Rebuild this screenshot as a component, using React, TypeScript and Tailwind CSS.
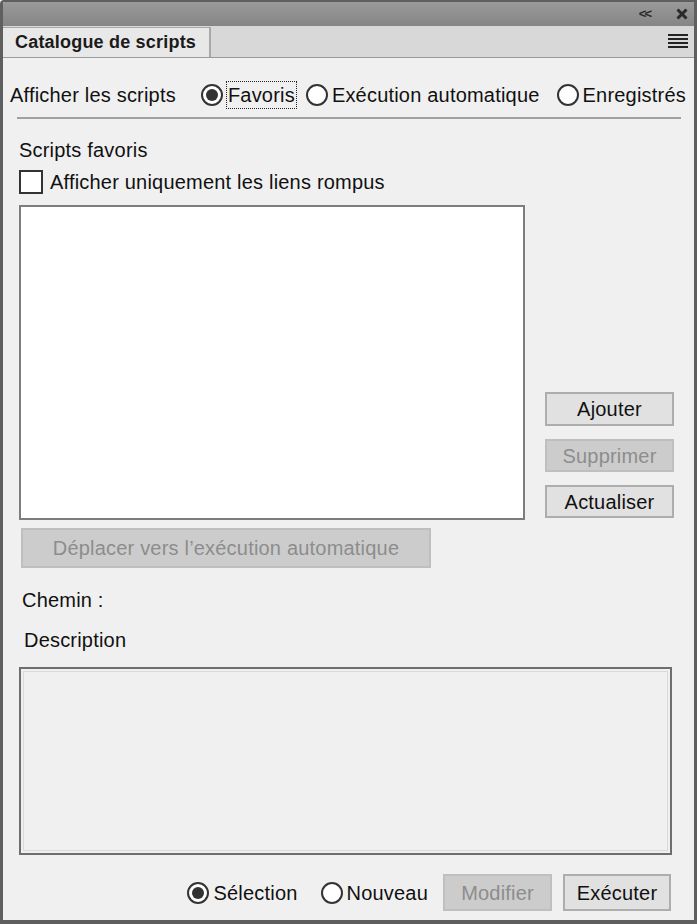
import type { ReactNode } from 'react'

// Radio bullet drawn as a circle, filled when checked
function Radio({ checked, label, focused }: { checked?: boolean; label: string; focused?: boolean }) {
  return (
    <span className="flex items-center gap-[4px]">
      <span className="flex h-[22px] w-[22px] items-center justify-center rounded-full border-2 border-[#333] bg-white">
        {checked && <span className="h-[12px] w-[12px] rounded-full bg-[#333]" />}
      </span>
      <span className={focused ? 'outline-1 outline-dotted outline-[#222] px-[1px] leading-[26px]' : 'leading-[26px]'}>
        {label}
      </span>
    </span>
  )
}

function Btn({ children, disabled, className = '' }: { children: ReactNode; disabled?: boolean; className?: string }) {
  return (
    <div
      className={`flex items-center justify-center border-2 ${
        disabled ? 'border-[#bfbfbf] bg-[#cccccc] text-[#8d8d8d]' : 'border-[#adadad] bg-[#e1e1e1] text-[#111]'
      } ${className}`}
    >
      {children}
    </div>
  )
}

export default function App() {
  return (
    <div
      className="flex h-[924px] w-[697px] flex-col overflow-hidden rounded-tl-[4px] border-x-[3px] border-b-[4px] border-t-[2px] border-[#5f5f5f] bg-[#f0f0f0] text-[20px] tracking-[0.2px] text-[#111]"
      style={{ fontFamily: '"Liberation Sans", Arial, sans-serif' }}
    >
      {/* title bar */}
      <div className="flex h-[24px] items-center justify-end gap-[26px] bg-gradient-to-b from-[#9a9a9a] to-[#858585] pr-[6px]">
        <span className="text-[13px] font-bold tracking-[-2px] text-[#2a2a2a]">&lt;&lt;</span>
        <svg width="12" height="12" viewBox="0 0 12 12">
          <path d="M1.5 1.5 L10.5 10.5 M10.5 1.5 L1.5 10.5" stroke="#2a2a2a" strokeWidth="3" />
        </svg>
      </div>

      {/* tab row */}
      <div className="flex h-[32px] items-end border-b border-[#9a9a9a] bg-[#d8d8d8]">
        <div className="flex h-[30px] w-[208px] items-center border-r-2 border-t border-[#a8a8a8] bg-[#e8e8e8] pl-[12px] text-[18px] font-bold tracking-[0.2px] text-[#1a1a1a]">
          Catalogue de scripts
        </div>
        <div className="flex-1" />
        <div className="mb-[9px] mr-[6px] flex w-[20px] flex-col gap-[2px]">
          <span className="h-[2px] bg-[#222]" />
          <span className="h-[2px] bg-[#222]" />
          <span className="h-[2px] bg-[#222]" />
          <span className="h-[2px] bg-[#222]" />
        </div>
      </div>

      {/* content */}
      <div className="flex flex-1 flex-col px-[7px]">
        <div className="mt-[24px] flex items-center">
          <span className="leading-[26px]">Afficher les scripts</span>
          <div className="ml-[25px] flex items-center">
            <Radio checked focused label="Favoris" />
            <span className="w-[10px]" />
            <Radio label="Exécution automatique" />
            <span className="w-[17px]" />
            <Radio label="Enregistrés" />
          </div>
        </div>
        <div className="ml-[7px] mr-[6px] mt-[9px] h-[2px] bg-[#a0a0a0]" />

        <div className="ml-[9px] mt-[18px] leading-[26px]">Scripts favoris</div>
        <div className="ml-[9px] mt-[6px] flex items-center gap-[7px]">
          <span className="h-[24px] w-[24px] border-2 border-[#333] bg-white" />
          <span className="leading-[26px]">Afficher uniquement les liens rompus</span>
        </div>

        <div className="mt-[10px] flex">
          <div className="ml-[9px] h-[315px] w-[506px] border-2 border-[#7d7d7d] bg-white" />
          <div className="ml-[20px] flex flex-col justify-end gap-[13px] pb-[2px]">
            <Btn className="h-[34px] w-[129px]">Ajouter</Btn>
            <Btn disabled className="h-[33px] w-[129px]">Supprimer</Btn>
            <Btn className="h-[33px] w-[129px]">Actualiser</Btn>
          </div>
        </div>

        <Btn disabled className="ml-[11px] mt-[8px] h-[40px] w-[410px]">
          Déplacer vers l’exécution automatique
        </Btn>

        <div className="ml-[12px] mt-[19px] leading-[26px]">Chemin :</div>
        <div className="ml-[14px] mt-[14px] leading-[26px]">Description</div>

        <div className="ml-[9px] mt-[14px] h-[188px] w-[653px] border-2 border-[#6e6e6e] bg-[#f0f0f0] p-[2px]">
          <div className="h-full w-full border border-[#dadada]" />
        </div>

        <div className="mr-[16px] mt-[19px] flex items-center justify-end">
          <Radio checked label="Sélection" />
          <span className="w-[23px]" />
          <Radio label="Nouveau" />
          <Btn disabled className="ml-[15px] h-[37px] w-[109px]">Modifier</Btn>
          <Btn className="ml-[11px] h-[37px] w-[108px]">Exécuter</Btn>
        </div>
      </div>
    </div>
  )
}
